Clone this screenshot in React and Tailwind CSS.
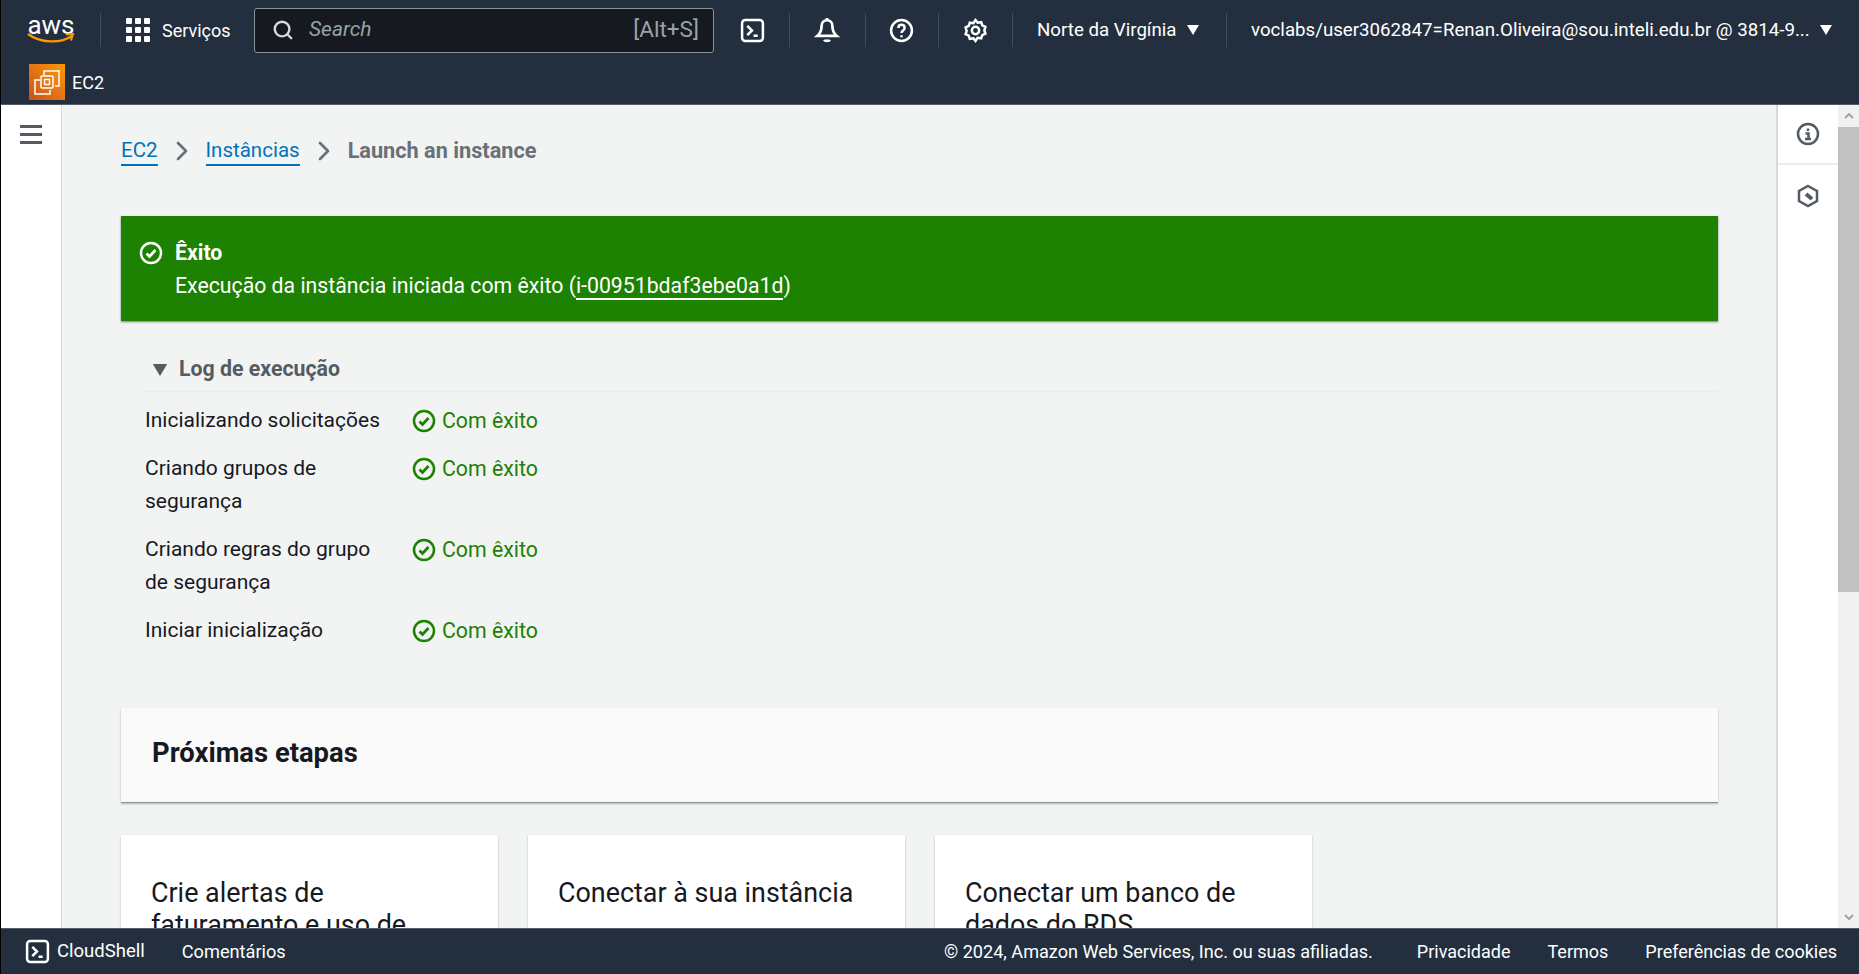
import React from "react";
import { ChevronRight, Search } from "lucide-react";

const font = { fontFamily: '"Roboto", "Liberation Sans", sans-serif' };

const TerminalIcon = ({ className }) => (
  <svg viewBox="0 0 24 24" className={className} fill="none" stroke="currentColor" strokeWidth="2.4">
    <rect x="2" y="2" width="20" height="20" rx="3" />
    <path d="M7 7.5l4.5 4.5L7 16.5M13 17h4" />
  </svg>
);

const CheckCircle = ({ className }) => (
  <svg viewBox="0 0 24 24" className={className} fill="none" stroke="currentColor" strokeWidth="2.5">
    <circle cx="12" cy="12" r="10" />
    <path d="M7.5 12.5l3 3 6-6.5" strokeWidth="2.8" />
  </svg>
);

const Caret = ({ className }) => (
  <svg viewBox="0 0 12 10" className={className} fill="currentColor">
    <path d="M0 0h12L6 10z" />
  </svg>
);

const Divider = () => <div className="h-[34px] w-px bg-[#414d5c]" />;

const AwsLogo = () => (
  <div className="relative flex h-[30px] w-[48px] flex-col items-center">
    <span className="text-[26px] leading-[20px] text-white">aws</span>
    <svg viewBox="0 0 48 12" className="absolute left-0 top-[18px] h-[12px] w-[48px]" fill="none">
      <path d="M1 1c12 9 32 10 44 2" stroke="#f90" strokeWidth="2.2" />
      <path d="M39 1.500l7-.5-2 6.500" stroke="#f90" strokeWidth="2" />
    </svg>
  </div>
);

const ServiceGrid = () => (
  <div className="grid grid-cols-3 gap-[3px]">
    {Array.from({ length: 9 }).map((_, i) => (
      <div key={i} className="h-[6px] w-[6px] rounded-[1px] bg-white" />
    ))}
  </div>
);

const Ec2Icon = () => (
  <div className="flex h-[36px] w-[36px] items-center justify-center bg-gradient-to-tr from-[#c8511b] to-[#ff9900]">
    <svg viewBox="0 0 36 36" className="h-[36px] w-[36px]" fill="none" stroke="white" strokeWidth="1.5">
      <path d="M15 11V7h15v15h-4M11 16H6v14h15v-4" />
      <rect x="12" y="12" width="12" height="12" rx="1" />
      <rect x="15.500" y="15.500" width="5" height="5" />
    </svg>
  </div>
);

const logRows = [
  ["Inicializando solicitações"],
  ["Criando grupos de", "segurança"],
  ["Criando regras do grupo", "de segurança"],
  ["Iniciar inicialização"],
];

const cards = [
  ["Crie alertas de", "faturamento e uso de"],
  ["Conectar à sua instância"],
  ["Conectar um banco de", "dados do RDS"],
];

const Header = () => (
  <header className="h-[105px] shrink-0 border-b border-[#545b64] bg-[#232f3e] text-white">
    <div className="flex h-[60px] items-center pl-[26px] text-[18.700px]">
      <AwsLogo />
      <div className="ml-[25px]"><Divider /></div>
      <div className="ml-[25px]"><ServiceGrid /></div>
      <span className="ml-[12px] w-[68px] whitespace-nowrap text-[18px]">Serviços</span>
      <div className="ml-[24px] flex h-[45px] w-[460px] items-center rounded-[3px] border border-[#879596] bg-[#16191f] pl-[17px] pr-[14px] text-[21px] text-[#95a5a6]">
        <Search className="h-[22px] w-[22px] text-[#d5dbdb]" strokeWidth={2.6} />
        <span className="ml-[15px] italic">Search</span>
        <span className="ml-auto text-[22.600px]">[Alt+S]</span>
      </div>
      <TerminalIcon className="ml-[26px] h-[25px] w-[25px]" />
      <div className="ml-[24px]"><Divider /></div>
      <svg viewBox="0 0 24 24" className="ml-[24px] h-[26px] w-[26px]" fill="none" stroke="white" strokeWidth="2.5">
        <path d="M12 3c-3 0-5 2.500-5 5.500 0 4-1 6.500-4 9h18c-3-2.500-4-5-4-9C17 5.500 15 3 12 3z" />
        <path d="M12 1v2M9.500 21c.5 1.500 4.500 1.500 5 0" />
      </svg>
      <div className="ml-[25px]"><Divider /></div>
      <svg viewBox="0 0 24 24" className="ml-[23px] h-[25px] w-[25px]" fill="none" stroke="white" strokeWidth="2.4">
        <circle cx="12" cy="12" r="10" />
        <path d="M9 9.500c0-4 6-4 6 0 0 2.500-3 2.500-3 5M12 16.500v2" />
      </svg>
      <div className="ml-[24px]"><Divider /></div>
      <svg viewBox="0 0 24 24" className="ml-[24px] h-[25px] w-[25px]" fill="none" stroke="white" strokeWidth="2.4">
        <path d="M12 2l2 2.500 3.500-.5 1 3 3 1.500-1 3.500 1 3-3 1.500-1 3-3.500-.5L12 22l-2-2.500-3.500.5-1-3-3-1.500 1-3-1-3.500 3-1.500 1-3 3.500.5z" />
        <circle cx="12" cy="12" r="3.500" />
      </svg>
      <div className="ml-[24px]"><Divider /></div>
      <span className="ml-[24px] w-[140px] whitespace-nowrap">Norte da Virgínia</span>
      <Caret className="ml-[10px] h-[10px] w-[12px]" />
      <div className="ml-[27px]"><Divider /></div>
      <span className="ml-[24px] w-[559px] whitespace-nowrap">voclabs/user3062847=Renan.Oliveira@sou.inteli.edu.br @ 3814-9...</span>
      <Caret className="ml-[10px] h-[10px] w-[12px]" />
    </div>
    <div className="flex items-center pl-[28px] pt-[4px] text-[18px]">
      <Ec2Icon />
      <span className="ml-[7px]">EC2</span>
    </div>
  </header>
);

const Breadcrumbs = () => (
  <nav className="flex items-center text-[20.500px] leading-[28px]">
    <span className="border-b-2 border-[#0073bb] text-[#0073bb]">EC2</span>
    <ChevronRight className="mx-[8px] h-[32px] w-[32px] text-[#687078]" strokeWidth={2} />
    <span className="border-b-2 border-[#0073bb] text-[#0073bb]">Instâncias</span>
    <ChevronRight className="mx-[8px] h-[32px] w-[32px] text-[#687078]" strokeWidth={2} />
    <span className="text-[21.700px] font-bold text-[#687078]">Launch an instance</span>
  </nav>
);

const Banner = () => (
  <div className="mt-[49px] flex h-[105px] bg-[#1d8102] pl-[18px] pt-[20px] text-[21.250px] leading-[33px] text-white shadow-[0_1px_2px_rgba(0,0,0,0.5)]">
    <CheckCircle className="mt-[5px] h-[24px] w-[24px]" />
    <div className="ml-[12px]">
      <div className="font-bold">Êxito</div>
      <div>
        Execução da instância iniciada com êxito (<span className="border-b-2 border-white">i-00951bdaf3ebe0a1d</span>)
      </div>
    </div>
  </div>
);

const LaunchLog = () => (
  <section className="mt-[29px] pl-[24px] text-[21px] leading-[33px]">
    <div className="flex h-[42px] items-start border-b border-[#eaeded] pl-[7px] pt-[2px] text-[#545b64]">
      <Caret className="mt-[12px] h-[12px] w-[16px]" />
      <span className="ml-[11px] text-[21.300px] font-bold">Log de execução</span>
    </div>
    <div className="mt-[12px] flex flex-col gap-[15px]">
      {logRows.map((lines) => (
        <div key={lines[0]} className="flex">
          <div className="w-[267px] text-[#16191f]">
            {lines.map((line) => (
              <div key={line}>{line}</div>
            ))}
          </div>
          <div className="flex items-start text-[#1d8102]">
            <CheckCircle className="mt-[5px] h-[24px] w-[24px]" />
            <span className="ml-[6px] text-[21.300px]">Com êxito</span>
          </div>
        </div>
      ))}
    </div>
  </section>
);

const App = () => (
  <div className="flex h-[974px] w-[1859px] flex-col overflow-hidden border-l border-black" style={font}>
    <Header />
    <div className="flex min-h-0 flex-1">
      <aside className="w-[61px] shrink-0 border-r border-[#d5dbdb] bg-white pl-[19px] pt-[20px]">
        <div className="flex flex-col gap-[5px]">
          <div className="h-[3px] w-[22px] bg-[#545b64]" />
          <div className="h-[3px] w-[22px] bg-[#545b64]" />
          <div className="h-[3px] w-[22px] bg-[#545b64]" />
        </div>
      </aside>
      <main className="min-w-0 flex-1 overflow-hidden bg-[#f2f3f3] pl-[59px] pr-[58px] pt-[30px]">
        <Breadcrumbs />
        <Banner />
        <LaunchLog />
        <div className="mt-[61px] flex h-[95px] items-center border-b border-[#879596] bg-[#fafafa] pb-[2px] pl-[31px] text-[27.400px] font-bold text-[#16191f] shadow-[0_1px_2px_rgba(0,0,0,0.25)]">
          Próximas etapas
        </div>
        <div className="mt-[32px] flex gap-[30px]">
          {cards.map((lines) => (
            <div key={lines[0]} className="h-[200px] w-[377px] bg-white pl-[30px] pt-[42px] text-[26.900px] leading-[32px] text-[#16191f] shadow-[0_1px_2px_rgba(0,0,0,0.25)]">
              {lines.map((line) => (
                <div key={line}>{line}</div>
              ))}
            </div>
          ))}
        </div>
      </main>
      <aside className="w-[62px] shrink-0 border-l-2 border-[#d5dbdb] bg-white">
        <div className="flex h-[60px] items-center justify-center border-b-2 border-[#eaeded]">
          <svg viewBox="0 0 24 24" className="h-[24px] w-[24px] text-[#545b64]" fill="none" stroke="currentColor" strokeWidth="2.5">
            <circle cx="12" cy="12" r="10" />
            <path d="M12 6.500v2.500M9.500 11.500H12.500v5M9 17h6" />
          </svg>
        </div>
        <div className="flex h-[62px] items-center justify-center">
          <svg viewBox="0 0 24 24" className="h-[24px] w-[24px] text-[#545b64]" fill="none" stroke="currentColor" strokeWidth="2.5">
            <path d="M12 2l9 5v10l-9 5-9-5V7z" />
            <path d="M10 10l6 5" strokeWidth="4" />
          </svg>
        </div>
      </aside>
      <div className="flex w-[21px] shrink-0 flex-col bg-[#f1f1f1] text-[#a3a3a3]">
        <div className="flex h-[22px] items-center justify-center">
          <svg viewBox="0 0 10 6" className="h-[6px] w-[10px]" fill="none" stroke="currentColor" strokeWidth="2">
            <path d="M1 5l4-4 4 4" />
          </svg>
        </div>
        <div className="h-[465px] bg-[#c1c1c1]" />
        <div className="mt-auto flex h-[22px] items-center justify-center">
          <svg viewBox="0 0 10 6" className="h-[6px] w-[10px]" fill="none" stroke="currentColor" strokeWidth="2">
            <path d="M1 1l4 4 4-4" />
          </svg>
        </div>
      </div>
    </div>
    <footer className="flex h-[46px] shrink-0 items-center border-t border-[#545b64] bg-[#232f3e] pl-[24px] pr-[22px] text-[18px] text-white">
      <TerminalIcon className="h-[25px] w-[25px]" />
      <span className="ml-[7px] text-[18.500px]">CloudShell</span>
      <span className="ml-[37px] text-[18.200px]">Comentários</span>
      <span className="ml-auto text-[18.100px]">© 2024, Amazon Web Services, Inc. ou suas afiliadas.</span>
      <span className="ml-[44px]">Privacidade</span>
      <span className="ml-[37px]">Termos</span>
      <span className="ml-[37px]">Preferências de cookies</span>
    </footer>
  </div>
);

export default App;
